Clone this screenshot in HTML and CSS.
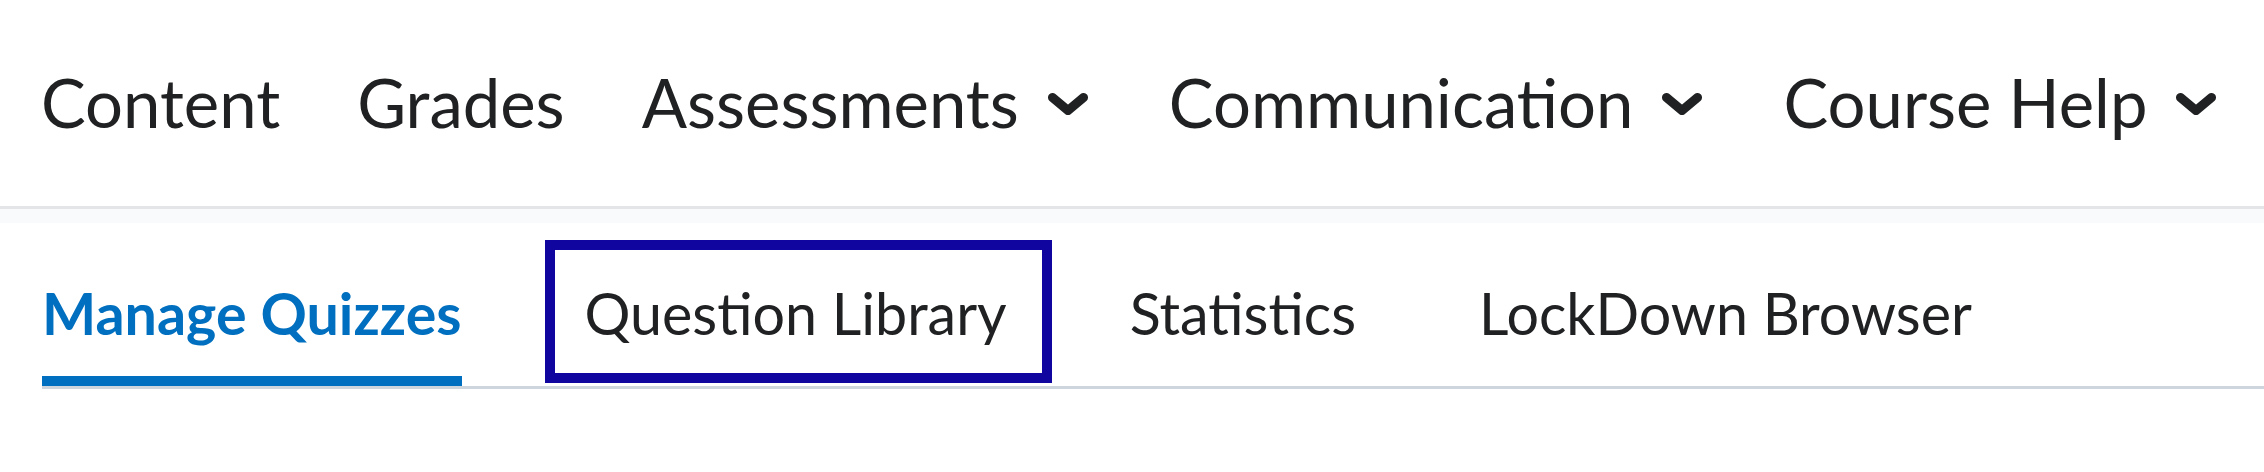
FILE: index.html
```html
<!DOCTYPE html>
<html lang="en">
<head>
<meta charset="utf-8">
<title>Quizzes</title>
<link rel="stylesheet" href="styles.css">
</head>
<body>
<header class="topnav">
  <nav class="topnav-items">
    <a class="topnav-item">Content</a>
    <a class="topnav-item">Grades</a>
    <a class="topnav-item">Assessments<svg class="chev" viewBox="0 0 40 22" aria-hidden="true"><path d="M4.5 4.5 L20 17.5 L35.5 4.5"/></svg></a>
    <a class="topnav-item">Communication<svg class="chev" viewBox="0 0 40 22" aria-hidden="true"><path d="M4.5 4.5 L20 17.5 L35.5 4.5"/></svg></a>
    <a class="topnav-item">Course Help<svg class="chev" viewBox="0 0 40 22" aria-hidden="true"><path d="M4.5 4.5 L20 17.5 L35.5 4.5"/></svg></a>
  </nav>
</header>
<div class="shadow-band"></div>
<main class="page">
  <div class="tablist" role="tablist">
    <div class="tab selected" role="tab">Manage Quizzes</div>
    <div class="tab focused" role="tab">Question Library</div>
    <div class="tab" role="tab">Statistics</div>
    <div class="tab" role="tab">LockDown Browser</div>
  </div>
</main>
</body>
</html>
```
FILE: styles.css
```css
html, body {
  margin: 0;
  padding: 0;
  background: #ffffff;
}
body {
  font-family: "Lato", "Noto Sans", sans-serif;
  color: #202122;
}
.topnav {
  height: 206px;
  border-bottom: 3px solid #e3e5e8;
  display: flex;
  align-items: center;
  padding-left: 41px;
  box-sizing: content-box;
}
.topnav-items {
  display: flex;
  align-items: center;
  gap: 77px;
  margin-top: -2px;
}
.topnav-item {
  display: flex;
  align-items: center;
  gap: 29px;
  font-size: 67px;
  line-height: 1.2;
  color: #202122;
  text-decoration: none;
  white-space: nowrap;
}
.chev {
  width: 40px;
  height: 22px;
  fill: none;
  stroke: #202122;
  stroke-width: 9;
  stroke-linecap: round;
  stroke-linejoin: round;
  margin-top: 4px;
  margin-right: 4px;
}
.shadow-band {
  height: 14px;
  background: #f9fafb;
}
.page {
  padding-left: 42px;
}
.tablist {
  display: flex;
  gap: 123px;
  border-bottom: 3px solid #cfd5dc;
}
.tab {
  position: relative;
  font-size: 57.4px;
  line-height: 1.2;
  padding-top: 56px;
  padding-bottom: 28px;
  border-bottom: 10px solid transparent;
  white-space: nowrap;
  color: #202122;
}
.tab.selected {
  color: #006fbf;
  font-weight: 700;
  border-bottom-color: #006fbf;
}
.tab.focused::after {
  content: "";
  position: absolute;
  left: -40px;
  right: -45px;
  top: 17px;
  bottom: -7px;
  border: 10px solid #10069f;
}
```
